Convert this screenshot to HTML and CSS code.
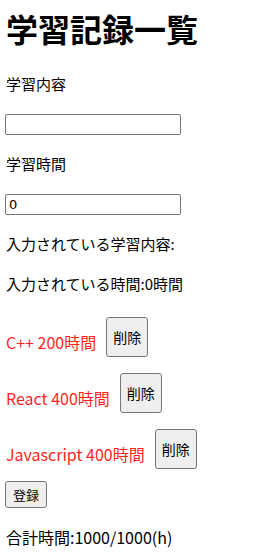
FILE: index.html
```html
<!DOCTYPE html>
<html lang="ja">

<head>
    <meta charset="UTF-8">
    <meta name="viewport" content="width=device-width, initial-scale=1.0">
    <title>学習記録一覧</title>
    <link rel="stylesheet" href="styles.css">
</head>

<body>
    <div class="app">
        <h1 class="title">学習記録一覧</h1>
        <p class="label">学習内容</p>
        <input type="text" class="field">
        <p class="label">学習時間</p>
        <input type="number" class="field" value="0">
        <p class="info">入力されている学習内容:</p>
        <p class="info">入力されている時間:0時間</p>

        <div class="records">
            <div class="record">
                <p class="record-text">C++ 200時間</p>
                <button class="delete-btn">削除</button>
            </div>
            <div class="record">
                <p class="record-text">React 400時間</p>
                <button class="delete-btn">削除</button>
            </div>
            <div class="record">
                <p class="record-text">Javascript 400時間</p>
                <button class="delete-btn">削除</button>
            </div>
        </div>

        <button class="add-btn">登録</button>
        <p class="total">合計時間:1000/1000(h)</p>
    </div>
</body>

</html>
```

FILE: styles.css
```css
* {
    margin: 0;
    padding: 0;
    box-sizing: border-box;
}

body {
    font-family: "Noto Sans CJK JP", "Noto Sans", sans-serif;
    color: #000;
    background: #fff;
}

.app {
    display: flex;
    flex-direction: column;
    align-items: flex-start;
    padding: 8px 5px 0;
}

.title {
    font-size: 32px;
    font-weight: bold;
    line-height: 40px;
    margin-left: 1px;
}

.label,
.info,
.total {
    font-size: 15px;
    line-height: 24px;
    margin-left: 1px;
}

.label {
    margin-top: 24px;
}

.field {
    width: 176px;
    height: 21px;
    padding: 0 3px;
    font-size: 13px;
    font-family: "DejaVu Sans", sans-serif;
    border: 1px solid #767676;
    border-radius: 2px;
    outline: none;
    -moz-appearance: textfield;
}
.field::-webkit-inner-spin-button,
.field::-webkit-outer-spin-button {
    -webkit-appearance: none;
}

.label + .field {
    margin-top: 18px;
}
.field + .label {
    margin-top: 17px;
}

.info {
    margin-top: 16px;
}
.field + .info {
    margin-top: 17px;
}

.records {
    display: flex;
    flex-direction: column;
    gap: 16px;
    margin-top: 21px;
}

.record {
    display: flex;
    align-items: flex-start;
    gap: 10px;
}

.record-text {
    color: #ff1f1f;
    font-size: 16px;
    line-height: 24px;
    margin-top: 13px;
    margin-left: 1px;
}

.delete-btn,
.add-btn {
    font-family: "Noto Sans CJK JP", sans-serif;
    color: #000;
    background-color: #efefef;
    border: 1px solid #767676;
    border-radius: 3px;
    cursor: pointer;
}

.delete-btn {
    font-size: 14px;
    line-height: 18px;
    padding: 10px 6px;
}

.add-btn {
    font-size: 13px;
    line-height: 19px;
    padding: 3px 7px;
    margin-top: 12px;
}

.total {
    font-size: 16px;
    margin-top: 17px;
}
```
